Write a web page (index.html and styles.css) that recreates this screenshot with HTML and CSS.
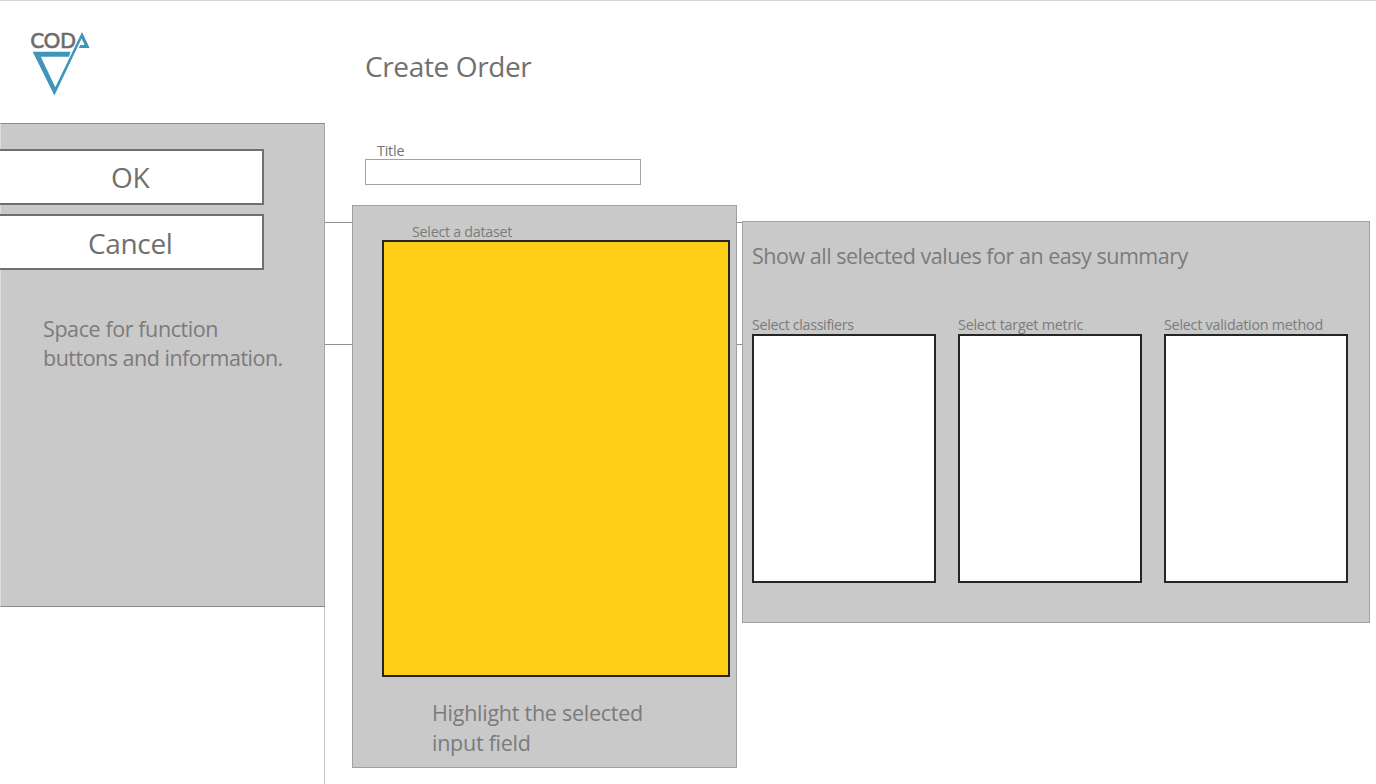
FILE: index.html
```html
<!DOCTYPE html>
<html lang="en">
<head>
<meta charset="utf-8">
<title>Create Order</title>
<link rel="stylesheet" href="styles.css">
</head>
<body>
<div class="page">
  <aside class="sidebar">
    <div class="brand">
      <svg class="logo" width="70" height="70" viewBox="25 28 70 70" role="img" aria-label="CODA">
        <text class="logo-text" x="30.4" y="47.8" textLength="45.4">COD</text>
        <path class="logo-mark" d="M32.7 51.8H70.6L69 56.8H40.8L55.3 87.2L82 32L89.6 48H78.8L80.2 45H84.6L81.6 38.5L54.4 95.5Z"/>
      </svg>
    </div>
    <div class="side-panel">
      <button class="action ok"><span class="t-ok">OK</span></button>
      <button class="action cancel"><span class="t-cancel">Cancel</span></button>
      <p class="note side-note"><span class="t-space">Space for function</span><br><span class="t-buttons">buttons and information.</span></p>
    </div>
  </aside>
  <main class="main">
    <h1 class="heading"><span class="t-heading">Create Order</span></h1>
    <label class="label title-label" for="title"><span class="t-title">Title</span></label>
    <input class="title-input" id="title" type="text">
    <div class="workspace">
      <section class="panel dataset">
        <div class="label dataset-label"><span class="t-dataset">Select a dataset</span></div>
        <div class="box highlighted"></div>
        <p class="note dataset-note"><span class="t-highlight">Highlight the selected</span><br><span class="t-input">input field</span></p>
      </section>
      <section class="panel summary">
        <p class="note summary-note"><span class="t-show">Show all selected values for an easy summary</span></p>
        <div class="choices">
          <div class="choice"><div class="label"><span class="t-classifiers">Select classifiers</span></div><div class="box"></div></div>
          <div class="choice"><div class="label"><span class="t-metric">Select target metric</span></div><div class="box"></div></div>
          <div class="choice"><div class="label"><span class="t-validation">Select validation method</span></div><div class="box"></div></div>
        </div>
      </section>
    </div>
  </main>
</div>
</body>
</html>
```
FILE: styles.css
```css
* { box-sizing: border-box; }
body { margin: 0; background: #fff; color: #707070; font-family: "Open Sans", "Noto Sans", sans-serif; }
.page { display: flex; width: 1376px; height: 784px; border-top: 1px solid #d6d6d6; overflow: hidden; }
.sidebar { width: 325px; flex: none; display: flex; flex-direction: column;
  background: linear-gradient(#c6c6c6, #c6c6c6) right 0 top 600px / 1px 200px no-repeat; }
.brand { height: 122px; padding: 27px 0 0 25px; }
.logo { display: block; }
.logo-text { font: 400 20.5px Lato, sans-serif; fill: #6d6d6d; stroke: #6d6d6d; stroke-width: .7px; }
.logo-mark { fill: #4095b8; }
.side-panel { height: 484px; padding-top: 25px; background: #c9c9c9; border: 1px solid #8b8b8b; border-right-color: #a5a5a5; border-left-color: #dedede; }
.action { display: block; width: 264px; height: 56px; margin: 0 0 9px -1px; padding: 0; background: #fff;
  border: 2px solid #707070; border-left: 0; color: #707070; font: 28px/52px "Open Sans", sans-serif; text-align: left; }
.action.ok { padding-left: 111px; }
.action.cancel { padding: 1px 0 0 88px; }
.note { margin: 0; font-size: 21.5px; line-height: 29.5px; color: #7b7b7b; white-space: nowrap; }
.side-note { margin: 44px 0 0 42px; line-height: 29px; }
.main { flex: 1; min-width: 0; }
.heading { margin: 0; padding: 45px 0 0 40px; height: 141px; font-size: 28px; font-weight: 400; line-height: 40px; white-space: nowrap; }
.label { display: block; height: 18px; font-size: 14.3px; line-height: 18px; color: #7b7b7b; white-space: nowrap; }
.title-label { padding-left: 52px; color: #707070; }
.title-input { display: block; width: 276px; height: 26px; margin: -1px 0 0 40px; border: 1px solid #a2a2a2; border-radius: 0; background: #fff; }
.workspace { display: flex; align-items: flex-start; gap: 5px; margin-top: 20px; padding-left: 27px;
  background: linear-gradient(#909090, #909090) 0 17px / 420px 1px no-repeat, linear-gradient(#909090, #909090) 0 139px / 420px 1px no-repeat; }
.panel { flex: none; background: #c9c9c9; border: 1px solid #a1a1a1; }
.dataset { width: 385px; height: 563px; padding: 16px 0 0 29px; }
.dataset-label { padding-left: 30px; line-height: 20px; }
.box { background: #fff; border: 2px solid #252525; }
.highlighted { width: 348px; height: 437px; background: #ffcf18; }
.dataset-note { margin: 21px 0 0 50px; }
.summary { width: 628px; height: 402px; margin-top: 16px; padding: 20px 0 0 9px; }
.summary-note { height: 29px; line-height: 28px; }
.choices { display: flex; gap: 22px; margin-top: 44px; }
.choice { width: 184px; }
.choice .box { height: 249px; }
.choice .label { height: 19px; line-height: 19px; }
.t-ok { letter-spacing: -.3px; }
.t-cancel { letter-spacing: -.35px; }
.t-heading { letter-spacing: -.37px; }
.t-space { letter-spacing: -.41px; }
.t-buttons { letter-spacing: -.5px; }
.t-highlight, .t-input { letter-spacing: -.26px; }
.t-show { letter-spacing: -.48px; }
.t-dataset { letter-spacing: -.28px; }
.t-classifiers { letter-spacing: -.34px; }
.t-metric { letter-spacing: -.21px; }
.t-validation { letter-spacing: -.23px; }
.t-title { letter-spacing: -.2px; }
```
